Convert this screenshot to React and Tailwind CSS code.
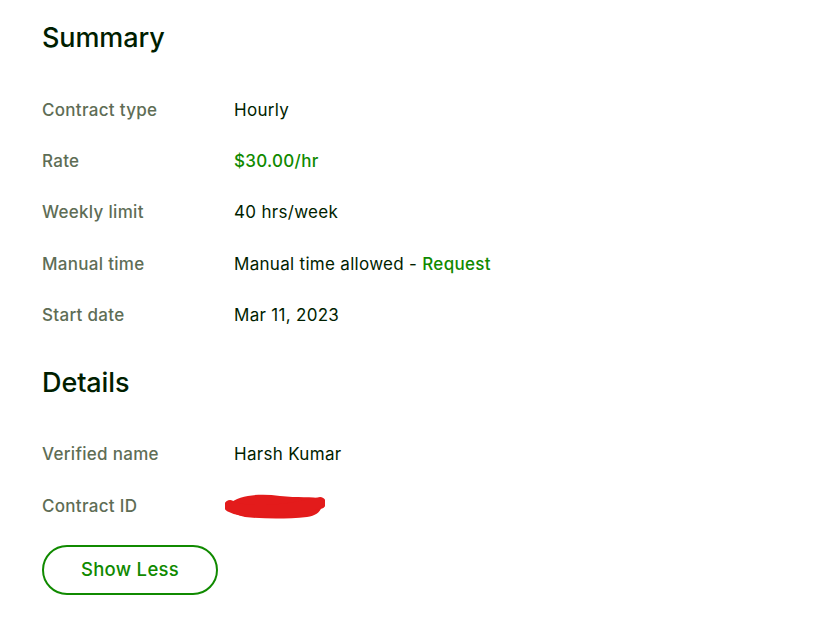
import React from "react";

function Row({ label, children }) {
  return (
    <div className="flex items-center h-[51.3px]">
      <div className="w-[192px] text-[#5e6d55] font-medium">{label}</div>
      <div className="text-[#001e00]">{children}</div>
    </div>
  );
}

export default function App() {
  return (
    <div className="w-[840px] h-[634px] bg-white pl-[42px] pt-[20px] text-[17px] tracking-[0.3px]" style={{ fontFamily: "Inter, 'Liberation Sans', sans-serif" }}>
      <h2 className="text-[27px] font-medium text-[#001e00] leading-[36px] tracking-[-0.1px]">Summary</h2>
      <div className="mt-[29px]">
        <Row label="Contract type">Hourly</Row>
        <Row label="Rate"><span className="text-[#108a00] font-medium">$30.00/hr</span></Row>
        <Row label="Weekly limit">40 hrs/week</Row>
        <Row label="Manual time">Manual time allowed - <span className="text-[#108a00] font-medium">Request</span></Row>
        <Row label="Start date">Mar 11, 2023</Row>
      </div>
      <h2 className="mt-[24px] text-[27px] font-medium text-[#001e00] leading-[36px] tracking-[-0.1px]">Details</h2>
      <div className="mt-[28px]">
        <Row label="Verified name">Harsh Kumar</Row>
        <div className="flex items-center h-[51.3px]">
          <div className="w-[183px] text-[#5e6d55] font-medium">Contract ID</div>
          <svg width="100" height="32" viewBox="0 0 100 32">
            <path d="M4 14 C 14 5, 35 3, 55 6 C 72 8, 88 6, 96 9 C 99 16, 96 25, 82 27 C 62 29, 40 29, 20 27 C 10 25, 1 20, 4 14 Z" fill="#e31b1b" />
            <path d="M5 16 C 20 24, 55 22, 95 13" stroke="#e31b1b" strokeWidth="12" strokeLinecap="round" fill="none" />
          </svg>
        </div>
      </div>
      <button className="mt-[13px] w-[176px] h-[50px] rounded-full border-2 border-[#108a00] text-[#108a00] text-[18.5px] tracking-[0.3px] font-medium">Show Less</button>
    </div>
  );
}
